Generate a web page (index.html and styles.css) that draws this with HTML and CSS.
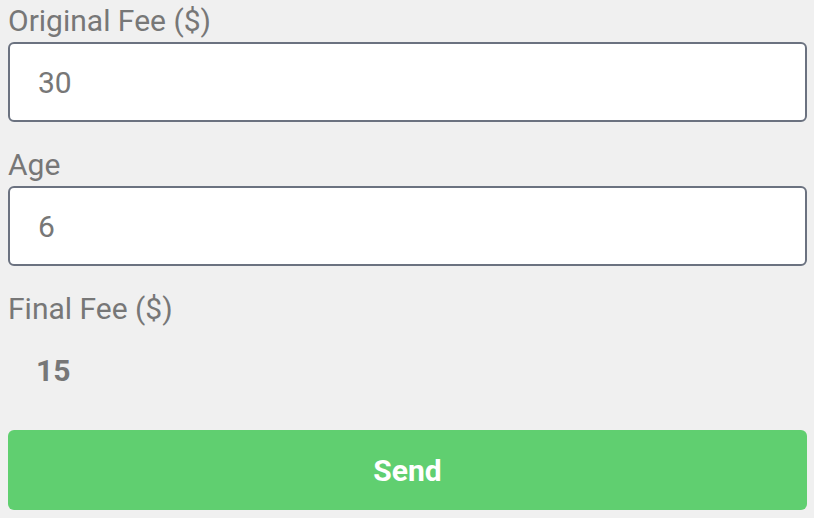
FILE: index.html
```html
<!DOCTYPE html>
<html lang="en">
<head>
  <meta charset="UTF-8" />
  <meta name="viewport" content="width=device-width, initial-scale=1.0" />
  <title>Fee Calculator</title>
  <link rel="stylesheet" href="styles.css">
</head>
<body>
  <form class="fee-form">
    <label class="field-label" for="fee">Original Fee ($)</label>
    <input class="field-input" id="fee" type="text" value="30" />
    <label class="field-label" for="age">Age</label>
    <input class="field-input" id="age" type="text" value="6" />
    <div class="field-label">Final Fee ($)</div>
    <div class="result">15</div>
    <button class="send-btn" type="button">Send</button>
  </form>
</body>
</html>
```

FILE: styles.css
```css
body {
  font-family: Roboto, 'Noto Sans', sans-serif;
  background-color: #f0f0f0;
  color: #777777;
  margin: 0;
  padding: 0 7px 0 8px;
}
.fee-form {
  display: flex;
  flex-direction: column;
}
.field-label {
  font-size: 30px;
  line-height: 42px;
}
.field-input {
  box-sizing: border-box;
  height: 80px;
  margin: 0 0 22px 0;
  padding: 0 28px;
  font-family: Roboto, 'Noto Sans', sans-serif;
  font-size: 30px;
  color: #777777;
  background: #ffffff;
  border: 2px solid #6b7280;
  border-radius: 6px;
  outline: none;
}
.result {
  font-size: 30px;
  font-weight: bold;
  line-height: 34px;
  padding: 24px 28px 14px;
}
.send-btn {
  margin-top: 28px;
  height: 80px;
  font-family: Roboto, 'Noto Sans', sans-serif;
  font-size: 30px;
  font-weight: bold;
  color: white;
  background: #60cf70;
  border: none;
  border-radius: 6px;
  cursor: pointer;
}
```
